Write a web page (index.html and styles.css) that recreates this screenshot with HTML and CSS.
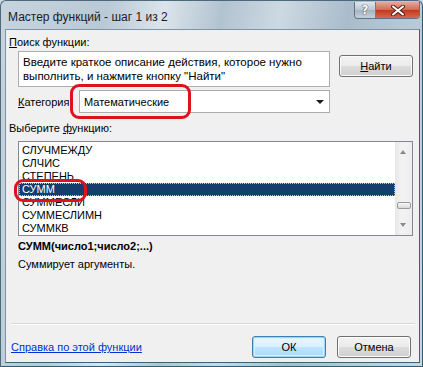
FILE: index.html
```html
<!DOCTYPE html>
<html lang="ru">
<head>
    <meta charset="UTF-8">
    <title>Мастер функций - шаг 1 из 2</title>
    <link rel="stylesheet" href="styles.css">
</head>
<body>

    <div class="window">
        <div class="titlebar">
            <span class="title">Мастер функций - шаг 1 из 2</span>
            <div class="caption-btns">
                <span class="cap-help">?</span>
                <span class="cap-close">
                    <svg width="14" height="11" viewBox="0 0 14 11">
                        <path d="M2 1.5 L12 9.5 M12 1.5 L2 9.5" stroke="#5a2218" stroke-width="4" stroke-linecap="round"/>
                        <path d="M2 1.5 L12 9.5 M12 1.5 L2 9.5" stroke="#fff" stroke-width="2" stroke-linecap="round"/>
                    </svg>
                </span>
            </div>
        </div>

        <div class="client">
            <div class="label"><u>П</u>оиск функции:</div>
            <div class="search-row">
                <div class="search-box">Введите краткое описание действия, которое нужно выполнить, и нажмите кнопку "Найти"</div>
                <button class="btn btn-find"><u>Н</u>айти</button>
            </div>

            <div class="category-row">
                <span class="cat-label"><u>К</u>атегория:</span>
                <div class="select">
                    <span>Математические</span>
                    <span class="select-arrow"></span>
                </div>
                <div class="mark mark-cat"></div>
            </div>

            <div class="label label-list">Выберите <u>ф</u>ункцию:</div>
            <div class="listbox">
                <ul class="items">
                    <li>СЛУЧМЕЖДУ</li>
                    <li>СЛЧИС</li>
                    <li>СТЕПЕНЬ</li>
                    <li class="selected">СУММ</li>
                    <li>СУММЕСЛИ</li>
                    <li>СУММЕСЛИМН</li>
                    <li>СУММКВ</li>
                </ul>
                <div class="scrollbar">
                    <span class="arr-up"></span>
                    <span class="thumb"></span>
                    <span class="arr-down"></span>
                </div>
                <div class="mark mark-sum"></div>
            </div>

            <div class="signature">СУММ(число1;число2;...)</div>
            <div class="desc">Суммирует аргументы.</div>

            <div class="spacer"></div>
            <div class="separator"></div>

            <div class="footer">
                <a href="#" class="help-link">Справка по этой функции</a>
                <div class="footer-btns">
                    <button class="btn btn-default">ОК</button>
                    <button class="btn">Отмена</button>
                </div>
            </div>
        </div>
    </div>

</body>
</html>
```

FILE: styles.css
```css
html, body { margin: 0; }
body { width: 423px; height: 367px; overflow: hidden; font-family: "Liberation Sans", Arial, sans-serif; font-size: 11px; color: #000; background: #cfdbe4; }

.window { box-sizing: border-box; width: 423px; height: 367px; display: flex; flex-direction: column; padding: 0 2px 3px 4px; border: 1px solid #4d6a7c; border-right-color: #2f5c70; border-bottom-color: #2f5c70; border-radius: 6px 6px 0 0; background: linear-gradient(100deg, #c7d4de 0%, #b9c9d6 22%, #dbe4eb 34%, #b2c3d0 46%, #cdd9e2 58%, #aabccb 72%, #c9d6e0 100%); }

.titlebar { height: 28px; display: flex; justify-content: space-between; align-items: flex-start; }
.title { font-family: "Liberation Sans", Arial, sans-serif; font-size: 12px; color: #1b1b1b; margin: 9px 0 0 3px; }

.caption-btns { display: flex; margin: 1px 0 0 0; border: 1px solid #5f7483; border-top: none; border-radius: 0 0 4px 4px; overflow: hidden; }
.cap-help { width: 20px; height: 16px; display: flex; align-items: center; justify-content: center; font: bold 12px "DejaVu Sans", sans-serif; color: #fff; text-shadow: 0 0 1px #333, 0 0 1px #333; background: linear-gradient(#dfe6ec, #b9c6d0 50%, #a4b3bf 51%, #c5d1da); border-right: 1px solid #6b7e8c; }
.cap-close { width: 43px; height: 16px; display: flex; align-items: center; justify-content: center; background: linear-gradient(#e8a898, #d46a54 48%, #c3391f 52%, #d8674b); }

.client { flex: 1; display: flex; flex-direction: column; background: #f0f0f0; border: 1px solid #7e94a3; border-right-color: #35667a; border-bottom-color: #35667a; padding: 0 4px 4px 3px; }

.label { margin-top: 6px; height: 13px; line-height: 13px; }
.label-list { margin-top: 9px; }

.search-row { display: flex; align-items: flex-start; margin: 2px 0 0 9px; }
.search-box { box-sizing: border-box; width: 312px; height: 36px; padding: 3px 4px; background: #fff; border: 1px solid #abadb3; font-size: 11.5px; line-height: 14px; }

.btn { box-sizing: border-box; width: 74px; height: 22px; padding: 0; font-family: inherit; font-size: 11px; color: #000; border: 1px solid #707070; border-radius: 3px; background: linear-gradient(#f2f2f2 0%, #ebebeb 50%, #dddddd 51%, #cfcfcf 100%); box-shadow: inset 0 0 0 1px #fcfcfc; }
.btn-find { margin: 4px 0 0 9px; }
.btn-default { border-color: #3c7fb1; box-shadow: inset 0 0 0 1px #9fd5f0, inset 0 0 0 2px #d8f0fb; background: linear-gradient(#eaf6fd 0%, #d9f0fc 50%, #bee6fd 51%, #a7d9f5 100%); }

.category-row { position: relative; display: flex; align-items: center; margin: 3px 0 0 9px; height: 23px; }
.cat-label { width: 61px; }
.select { box-sizing: border-box; width: 251px; height: 23px; display: flex; align-items: center; justify-content: space-between; padding: 0 5px 0 4px; background: #fff; border: 1px solid #abadb3; }
.select-arrow { width: 0; height: 0; border-left: 4px solid transparent; border-right: 4px solid transparent; border-top: 4px solid #1c1c1c; margin-top: 1px; }

.mark { position: absolute; border: 3px solid #e0101e; border-radius: 9px; }
.mark-cat { left: 52px; top: -6px; width: 115px; height: 29px; }

.listbox { position: relative; box-sizing: border-box; width: 395px; height: 95px; margin: 6px 0 0 9px; display: flex; background: #fff; border: 1px solid #828790; }
.items { list-style: none; margin: 0; padding: 2px 0 0 0; flex: 1; }
.items li { height: 13px; line-height: 13px; padding-left: 3px; }
.items li.selected { background: #143e6c; color: #fff; outline: 1px dotted #d9c690; outline-offset: -1px; }
.scrollbar { width: 17px; position: relative; background: linear-gradient(90deg, #e6e6e6, #f3f3f3 40%, #ececec); }
.arr-up, .arr-down { position: absolute; left: 5px; width: 0; height: 0; border-left: 3.5px solid transparent; border-right: 3.5px solid transparent; }
.arr-up { top: 8px; border-bottom: 4px solid #8a8a8a; }
.arr-down { bottom: 8px; border-top: 4px solid #8a8a8a; }
.thumb { position: absolute; left: 2px; top: 60px; box-sizing: border-box; width: 14px; height: 7px; border: 1px solid #9a9a9a; border-radius: 2px; background: linear-gradient(#f7f7f7, #d8d8d8); }
.mark-sum { left: -5px; top: 37px; width: 67px; height: 17px; }

.signature { margin: 4px 0 0 9px; height: 13px; line-height: 13px; font-weight: bold; }
.desc { margin: 5px 0 0 9px; height: 13px; line-height: 13px; }

.spacer { flex: 1; }
.separator { height: 1px; background: #d7d7d7; border-bottom: 1px solid #fff; margin: 0 0 0 2px; }

.footer { display: flex; justify-content: space-between; align-items: center; margin-top: 11px; padding-right: 4px; }
.help-link { color: #0033cc; text-decoration: underline; margin-left: 2px; }
.footer-btns { display: flex; gap: 11px; }
```
